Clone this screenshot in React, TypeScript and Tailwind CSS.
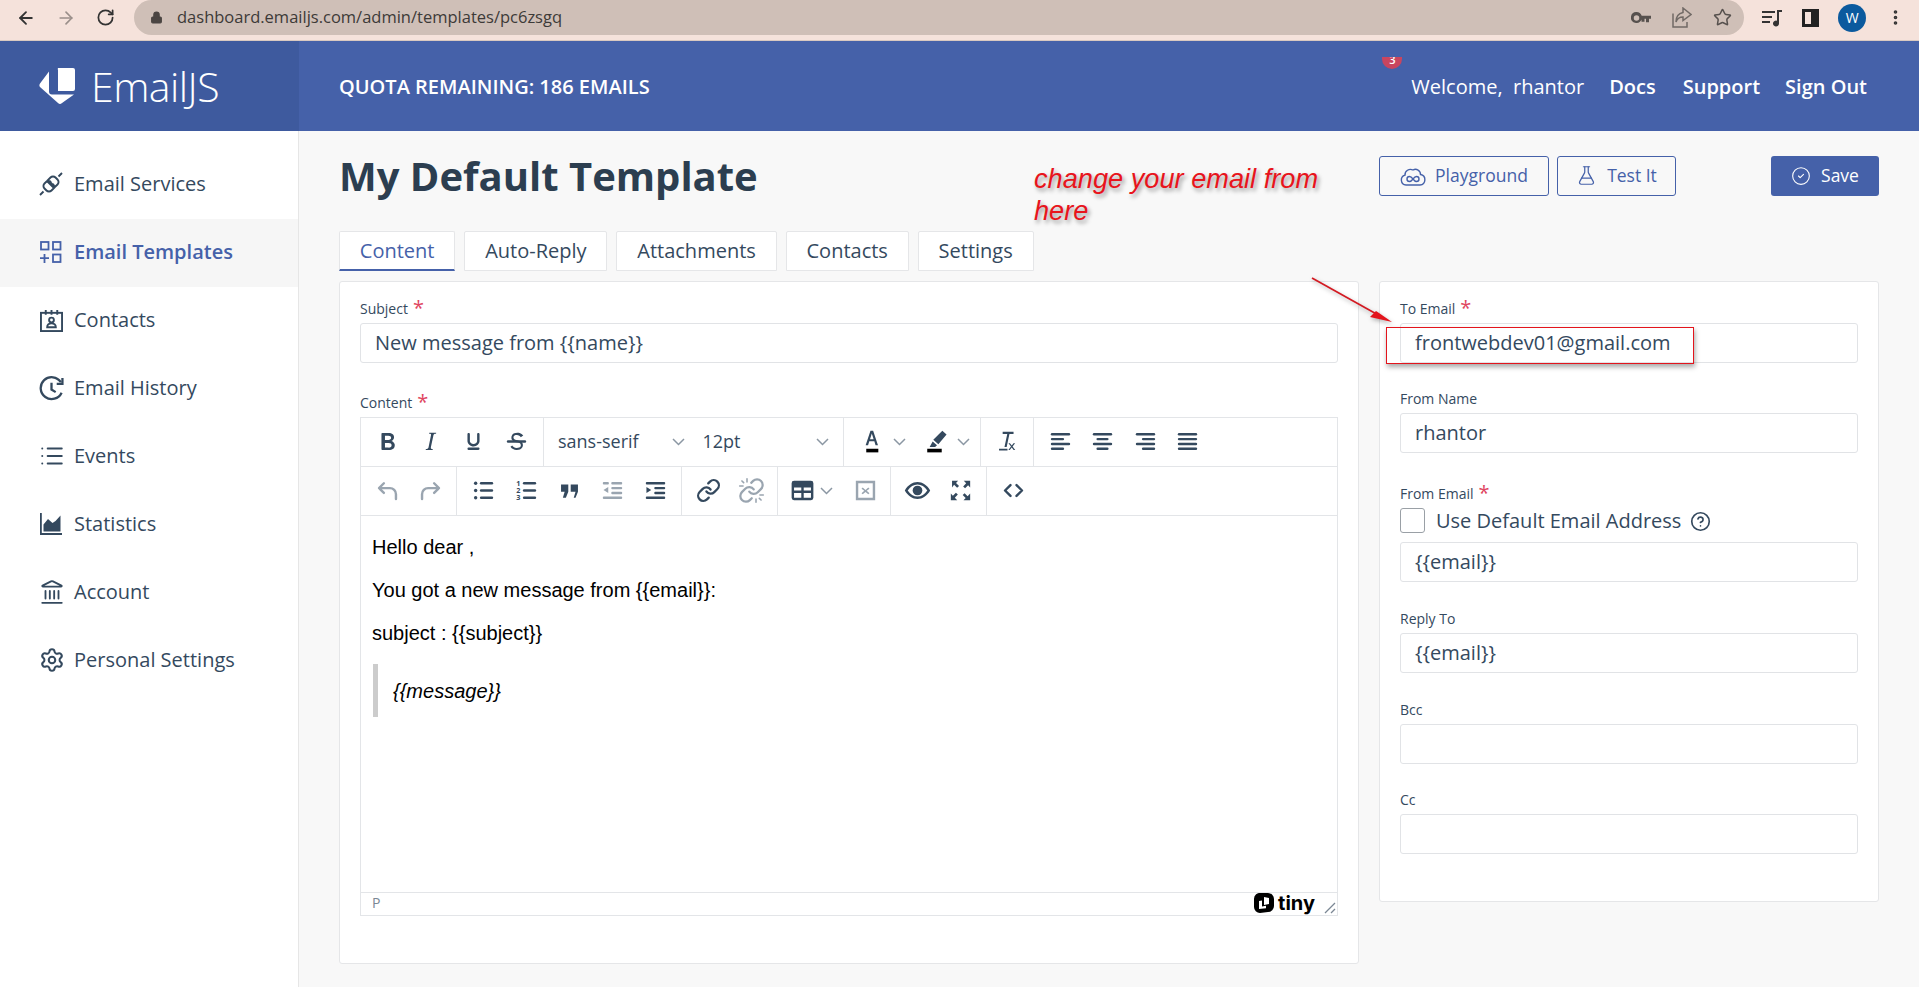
import { ReactNode } from 'react';
import {
  ArrowLeft, ArrowRight, RotateCw, Lock, Star, MoreVertical,
  List, Landmark, Settings, FlaskConical, CircleCheck, CircleHelp, Link,
} from 'lucide-react';

const FONT = "font-['Open_Sans',sans-serif]";

function Ico({ children, gray }: { children: ReactNode; gray?: boolean }) {
  return (
    <svg width="29" height="29" viewBox="0 0 24 24" fill="currentColor" className={gray ? 'text-[#9aa5b0]' : 'text-[#34495e]'}>
      {children}
    </svg>
  );
}

function Chevron({ className = '' }: { className?: string }) {
  return (
    <svg width="13" height="8" viewBox="0 0 13 8" fill="none" stroke="#8b97a3" strokeWidth="1.5" className={className}>
      <path d="M1 1l5.500 5.500L12 1" />
    </svg>
  );
}

function Btn({ children, w = 'w-[43px]' }: { children: ReactNode; w?: string }) {
  return <div className={`${w} h-full flex items-center justify-center shrink-0`}>{children}</div>;
}

function Group({ children, w, last }: { children: ReactNode; w: string; last?: boolean }) {
  return <div className={`${w} h-full pb-[1px] flex items-center justify-center shrink-0 ${last ? '' : 'border-r border-[#e3e5e8]'}`}>{children}</div>;
}

const lines = (rows: [number, number][]) =>
  rows.map(([x, w], i) => <rect key={i} x={x} y={5 + i * 4} width={w} height="2" rx="1" />);

function Toolbar() {
  return (
    <>
      <div className="h-[49px] flex items-center border-b border-[#e3e5e8]">
        <Group w="w-[183px]">
          <Btn><Ico><path d="M7.800 19c-.3 0-.5 0-.6-.2l-.2-.5V5.700c0-.2 0-.4.2-.5l.6-.2h5c1.500 0 2.700.3 3.500 1 .7.6 1.100 1.400 1.100 2.500a3 3 0 01-.6 1.900c-.4.6-1 1-1.600 1.200.4.1.9.3 1.300.6s.8.7 1 1.200c.4.4.5 1 .5 1.600 0 1.300-.4 2.300-1.300 3-.8.7-2.100 1-3.800 1H7.800zm5-8.300c.6 0 1.200-.1 1.600-.5.4-.3.6-.7.6-1.300 0-1.100-.8-1.700-2.300-1.700H9.900v3.500h2.900zm0 6.400c.9 0 1.500-.2 2-.5.4-.3.6-.8.6-1.400 0-1.300-.8-2-2.400-2H9.900V17h3z" /></Ico></Btn>
          <Btn><Ico><path d="M16.700 4.700l-.1.9h-.3c-.6 0-1 0-1.400.3-.3.3-.4.6-.5 1.100l-2.100 9.800v.6c0 .5.4.8 1.400.8h.2l-.2.8H8l.2-.8h.2c1.100 0 1.800-.5 2-1.500l2-9.800.1-.5c0-.6-.4-.8-1.400-.8h-.3l.2-.9h5.800z" /></Ico></Btn>
          <Btn><Ico><path d="M16 5c.6 0 1 .4 1 1v5.500a4 4 0 01-.4 1.800l-1 1.400a5.300 5.300 0 01-5.500 1 5 5 0 01-1.600-1c-.5-.4-.8-.9-1.100-1.400a4 4 0 01-.4-1.800V6c0-.6.4-1 1-1s1 .4 1 1v5.500c0 .3 0 .6.2 1l.6.7a3.300 3.300 0 002.200.8 3.400 3.400 0 002.200-.8c.3-.2.4-.5.6-.8l.2-.9V6c0-.6.4-1 1-1zM8 17h8c.6 0 1 .4 1 1s-.4 1-1 1H8a1 1 0 010-2z" /></Ico></Btn>
          <Btn><Ico><path d="M15.600 8.500c-.5-.7-1-1.100-1.300-1.300-.6-.4-1.300-.6-2-.6-2.700 0-2.800 1.700-2.800 2.100 0 1.600 1.800 2 3.200 2.300 4.400.9 4.600 2.800 4.600 3.900 0 1.400-.7 4.100-5 4.100A6.200 6.200 0 017 16.400l1.500-1.100c.4.6 1.600 2 3.700 2 1.600 0 2.500-.4 3-1 .3-.4.4-.9.4-1.300 0-1.600-1.800-2-3.200-2.300-4.400-.9-4.600-2.800-4.600-3.900 0-1.400.7-4.100 5-4.100 1.300 0 2.400.3 3.400 1 .5.3 1 .8 1.400 1.300l-1.500 1z" /><path d="M5 11h14a1 1 0 010 2H5a1 1 0 010-2z" /></Ico></Btn>
        </Group>
        <Group w="w-[300px]">
          <div className="w-[146px] pl-[14px] pr-[5px] flex items-center justify-between text-[18px] text-[#34495e]">sans-serif<Chevron /></div>
          <div className="w-[154px] pl-[13px] pr-[14px] flex items-center justify-between text-[18px] text-[#34495e]">12pt<Chevron /></div>
        </Group>
        <Group w="w-[137px]">
          <Btn w="w-[38px]"><Ico><path d="M7 18h10v3H7z" fill="#000" transform="translate(-1 0)" /><path d="M12 3h1.200l4 12h-2l-1-3.200H10L9 15H7l4-12zm-1.400 7.100h3l-1.500-4.800-1.500 4.800z" transform="translate(-1.500 0)" /></Ico></Btn>
          <Chevron className="mr-[13px]" />
          <Btn w="w-[38px]"><Ico><path d="M16 3l3.500 3.200-6.800 8-4.200-3.600L16 3zM8 12l3.600 3.100-1.600 1.400H5.500L8 12z" /><path d="M3.500 18h12v3h-12z" fill="#000" /></Ico></Btn>
          <Chevron />
        </Group>
        <Group w="w-[53px]">
          <Ico><path d="M8 4h9v1.700h-3.400l-2.300 10.800H9.500L11.800 5.700H8zM5 18h7v1.500H5z" /><path d="M14 13.500l1.500 1.900 1.500-1.900h1.300l-2.100 2.700 2.200 2.800h-1.300l-1.600-2-1.600 2H12.700l2.200-2.800-2.100-2.700z" /></Ico>
        </Group>
        <div className="h-full pb-[1px] flex items-center pl-[5px]">
          <Btn w="w-[42.500px]"><Ico>{lines([[4, 16], [4, 11], [4, 16], [4, 11]])}</Ico></Btn>
          <Btn w="w-[42.500px]"><Ico>{lines([[4, 16], [7, 10], [4, 16], [7, 10]])}</Ico></Btn>
          <Btn w="w-[42.500px]"><Ico>{lines([[4, 16], [9, 11], [4, 16], [9, 11]])}</Ico></Btn>
          <Btn w="w-[42.500px]"><Ico>{lines([[4, 16], [4, 16], [4, 16], [4, 16]])}</Ico></Btn>
        </div>
      </div>
      <div className="h-[49px] flex items-center border-b border-[#e3e5e8]">
        <Group w="w-[96px]">
          <Btn><Ico gray><path d="M9 6L5 10l4 4M5 10h9a5 5 0 015 5v4" fill="none" stroke="currentColor" strokeWidth="2" strokeLinecap="round" strokeLinejoin="round" /></Ico></Btn>
          <Btn><Ico gray><path d="M15 6l4 4-4 4M19 10h-9a5 5 0 00-5 5v4" fill="none" stroke="currentColor" strokeWidth="2" strokeLinecap="round" strokeLinejoin="round" /></Ico></Btn>
        </Group>
        <Group w="w-[225px]">
          <Btn><Ico><circle cx="5.500" cy="6" r="1.400" /><circle cx="5.500" cy="12" r="1.400" /><circle cx="5.500" cy="18" r="1.400" /><rect x="9" y="5" width="11" height="2" rx="1" /><rect x="9" y="11" width="11" height="2" rx="1" /><rect x="9" y="17" width="11" height="2" rx="1" /></Ico></Btn>
          <Btn><Ico><text x="3.500" y="8" fontSize="6" fontWeight="700">1</text><text x="3.500" y="14" fontSize="6" fontWeight="700">2</text><text x="3.500" y="20" fontSize="6" fontWeight="700">3</text><rect x="9" y="5" width="11" height="2" rx="1" /><rect x="9" y="11" width="11" height="2" rx="1" /><rect x="9" y="17" width="11" height="2" rx="1" /></Ico></Btn>
          <Btn><Ico><path d="M5 7h6v6l-2 5H6.500l1.500-5H5zM13 7h6v6l-2 5h-1.500l1.500-5h-4z" /></Ico></Btn>
          <Btn><Ico gray><rect x="11" y="5" width="9" height="2" rx=".8" /><rect x="11" y="9" width="9" height="2" rx=".8" /><rect x="11" y="13" width="9" height="2" rx=".8" /><rect x="4" y="17" width="16" height="2" rx=".8" /><rect x="4" y="5" width="5" height="2" rx=".8" /><path d="M8.500 9v5L4.500 11.500z" /></Ico></Btn>
          <Btn><Ico><rect x="11" y="9" width="9" height="2" rx=".8" /><rect x="11" y="13" width="9" height="2" rx=".8" /><rect x="4" y="5" width="16" height="2" rx=".8" /><rect x="4" y="17" width="16" height="2" rx=".8" /><path d="M4.500 9v5l4-2.500z" /></Ico></Btn>
        </Group>
        <Group w="w-[96px]">
          <Btn><Link size={25} strokeWidth={2.2} className="text-[#34495e]" /></Btn>
          <Btn>
            <svg width="27" height="27" viewBox="0 0 24 24" fill="none" stroke="#9aa5b0" strokeWidth="2" strokeLinecap="round">
              <path d="M10 13a5 5 0 007.540.540l3-3a5 5 0 00-7.070-7.070l-1.720 1.710" />
              <path d="M14 11a5 5 0 00-7.540-.540l-3 3a5 5 0 007.070 7.070l1.710-1.710" />
              <path d="M8 1.500v3M1.500 8h3M16 19.500v3M19.500 16h3M3.500 3.500l1.500 1.500M19 19l1.500 1.500" strokeWidth="1.400" />
            </svg>
          </Btn>
        </Group>
        <Group w="w-[113px]">
          <Btn w="w-[36px]"><Ico><path d="M5 4h14a2 2 0 012 2v12a2 2 0 01-2 2H5a2 2 0 01-2-2V6a2 2 0 012-2zm0 5.500V12h6V9.500zm8 0V12h6V9.500zM5 14v4h6v-4zm8 0v4h6v-4z" fillRule="evenodd" /></Ico></Btn>
          <Chevron className="mr-[14px]" />
          <Btn w="w-[37px]"><Ico gray><path d="M4 4h16v16H4zm2 2v12h12V6zm3.700 3.500l2.300 2 2.300-2 1 1-2.300 1.800 2.300 1.900-1 1-2.300-2-2.300 2-1-1 2.300-1.900-2.300-1.800z" fillRule="evenodd" /></Ico></Btn>
        </Group>
        <Group w="w-[96px]">
          <Btn><Ico><path d="M1.500 12C4 7.500 8 5 12 5s8 2.500 10.500 7c-2.500 4.500-6.500 7-10.500 7s-8-2.500-10.500-7zm2.400 0c2 3.200 5 5 8.100 5s6.100-1.800 8.100-5c-2-3.200-5-5-8.100-5s-6.100 1.800-8.100 5z" fillRule="evenodd" /><circle cx="12" cy="12" r="4" /></Ico></Btn>
          <Btn><Ico><path d="M4 4h6L8.300 5.700l2.500 2.500-1.600 1.600-2.500-2.500L5 9.500V4zM20 4v5.500l-1.700-1.800-2.500 2.500-1.600-1.600 2.500-2.500L14.700 4zM4 20v-5.500l1.700 1.800 2.500-2.500 1.600 1.600-2.500 2.500L9.300 20zM20 20h-5.500l1.800-1.700-2.500-2.500 1.600-1.600 2.500 2.500 2.100-2.200z" /></Ico></Btn>
        </Group>
        <Group w="w-[53px]" last>
          <Ico><path d="M9.500 7.500L5 12l4.500 4.500M14.500 7.500L19 12l-4.500 4.500" fill="none" stroke="currentColor" strokeWidth="2" strokeLinecap="round" strokeLinejoin="round" /></Ico>
        </Group>
      </div>
    </>
  );
}

function Field({ label, required, value, mt = '' }: { label: string; required?: boolean; value?: string; mt?: string }) {
  return (
    <div className={mt}>
      <FieldLabel label={label} required={required} />
      <TextBox value={value} />
    </div>
  );
}

function FieldLabel({ label, required }: { label: string; required?: boolean }) {
  return (
    <div className="h-[22px] text-[14px] leading-[16px] text-[#34495e] flex items-start">
      <span>{label}</span>
      {required && <span className="text-[#e0465f] text-[20px] leading-[14px] ml-[5px]">*</span>}
    </div>
  );
}

function TextBox({ value }: { value?: string }) {
  return (
    <div className="h-[40px] border border-[#e1e3e6] rounded-[3px] bg-white px-[14px] pb-[1px] flex items-center text-[20px] text-[#34495e]">
      {value}
    </div>
  );
}

const NAV: { label: string; icon: ReactNode; active?: boolean }[] = [
  {
    label: 'Email Services',
    icon: (
      <svg width="24" height="26" viewBox="0 0 24 24" fill="none" stroke="currentColor" strokeWidth="1.900">
        <path d="M1 23l3.500-3.500M23 1l-3.500 3.500M12 9l-2 2M15 12l-2 2" />
        <path d="M8 9l7 7-2.500 2.500a3.500 3.500 0 01-5 0l-2-2a3.500 3.500 0 010-5zM16 15L9 8l2.500-2.500a3.500 3.500 0 015 0l2 2a3.500 3.500 0 010 5z" />
      </svg>
    ),
  },
  {
    label: 'Email Templates',
    active: true,
    icon: (
      <svg width="24" height="25" viewBox="0 0 24 24" fill="none" stroke="currentColor" strokeWidth="1.800">
        <rect x="2" y="1.500" width="7.500" height="7.500" />
        <rect x="14" y="1.500" width="7.500" height="7.500" />
        <rect x="14" y="14" width="7.500" height="7.500" />
        <path d="M1 17.700h9M5.500 13.500v9" />
      </svg>
    ),
  },
  {
    label: 'Contacts',
    icon: (
      <svg width="25" height="23" viewBox="0 0 24 24" fill="none" stroke="currentColor" strokeWidth="2">
        <rect x="1" y="4" width="22" height="19" />
        <path d="M6 1v5M12 1v5M18 1v5M7.500 19c0-3 2-4 4.500-4s4.500 1 4.500 4z" />
        <circle cx="12" cy="11.500" r="2.500" />
      </svg>
    ),
  },
  {
    label: 'Email History',
    icon: (
      <svg width="25" height="25" viewBox="0 0 24 24" fill="none" stroke="currentColor" strokeWidth="2.200">
        <path d="M21 6a10.500 10.500 0 10.700 10" />
        <path d="M22.500 2v5.500H17M12 6.500V13l4 2.500" />
      </svg>
    ),
  },
  { label: 'Events', icon: <List size={26} strokeWidth={1.8} /> },
  {
    label: 'Statistics',
    icon: (
      <svg width="24" height="24" viewBox="0 0 24 24" fill="currentColor">
        <path d="M1 1h1.800v20H23v2H1z" />
        <path d="M4.500 19.500v-7L9 7l4.500 4 3-2 5-5.500v16z" />
      </svg>
    ),
  },
  { label: 'Account', icon: <Landmark size={26} strokeWidth={1.7} /> },
  { label: 'Personal Settings', icon: <Settings size={26} strokeWidth={1.9} /> },
];

function Chrome() {
  return (
    <div className="h-[41px] bg-[#f5e2db] border-b border-[#d9c9c1] flex items-start shrink-0">
      <div className="w-[134px] h-[35px] flex items-center text-[#333] shrink-0">
        <ArrowLeft size={20} strokeWidth={2.2} className="ml-[16px]" />
        <ArrowRight size={20} strokeWidth={2} className="ml-[20px] text-[#9a8f8a]" />
        <RotateCw size={19} strokeWidth={2.2} className="ml-[20px]" />
      </div>
      <div className="w-[1610px] h-[35px] rounded-r-[18px] rounded-l-[18px] bg-[#cfbfb7] flex items-center pl-[16px] pr-[12px] shrink-0">
        <Lock size={13} fill="#4b4542" className="text-[#4b4542]" />
        <span className="ml-[14px] text-[16.500px] text-[#3d3a38]">dashboard.emailjs.com/admin/templates/pc6zsgq</span>
        <svg width="20" height="12" viewBox="0 0 20 12" fill="#57514e" className="ml-auto">
          <path d="M5.500 0a5.500 5.500 0 015.200 3.800H20v3h-2v3.500h-3V6.800h-1.500v3h-3V7.600A5.500 5.500 0 115.500 0zm0 3.200a2.500 2.500 0 100 5.500 2.500 2.500 0 000-5.500z" fillRule="evenodd" />
        </svg>
        <svg width="20" height="21" viewBox="0 0 20 21" fill="none" stroke="#716a66" strokeWidth="1.500" className="ml-[21px]">
          <path d="M1 6.500V20h14v-5" />
          <path d="M11 1l8 6.500-8 6V10C7 10 5 12 4 15c0-5 2-8.500 7-9.500z" />
        </svg>
        <Star size={19} strokeWidth={1.9} className="ml-[21px] text-[#57514e]" />
      </div>
      <div className="flex-1 h-[35px] flex items-center justify-between pl-[18px] pr-[14px] text-[#333]">
        <svg width="20" height="18" viewBox="0 0 20 18" fill="currentColor">
          <path d="M0 2h13v2H0zM0 7h10v2H0zM0 12h8v2H0zM15 1h5v2h-3v11.500a3 3 0 11-2-2.800z" />
        </svg>
        <div className="w-[17px] h-[18px] border-[3px] border-[#222] border-r-[8px]" />
        <div className="w-[28px] h-[28px] rounded-full bg-[#0b5a9e] text-white text-[14px] flex items-center justify-center">W</div>
        <MoreVertical size={19} strokeWidth={2.600} />
      </div>
    </div>
  );
}

function Header() {
  return (
    <div className="h-[90px] bg-[#4561a9] flex text-white shrink-0">
      <div className="w-[299px] bg-[#3e5a9e] flex items-center pl-[39px] shrink-0">
        <svg width="36" height="36" viewBox="0 0 36 36" fill="#fff">
          <path d="M19 0h15a2 2 0 012 2v19a2 2 0 01-2 2H19a0 0 0 010 0V2a2 2 0 010-2z" />
          <path d="M10 3.500v20a3 3 0 003 3h22L23 35a3 3 0 01-4 0L1 19a3 3 0 010-3.500z" />
        </svg>
        <span className="ml-[16px] text-[41px] font-light tracking-[-0.5px] leading-none">EmailJS</span>
      </div>
      <div className="flex-1 flex items-center pl-[40px] pr-[52px] pt-[1px]">
        <span className="text-[20px] font-semibold">QUOTA REMAINING: 186 EMAILS</span>
        <div className="ml-auto relative flex items-center text-[20px] font-semibold">
          <span className="absolute left-[-29px] top-[-15px] w-[20px] h-[12px] rounded-b-full bg-[#c9455f] text-[11px] leading-[6px] text-center overflow-hidden">3</span>
          <span className="font-normal">Welcome,&nbsp; rhantor</span>
          <span className="ml-[25px]">Docs</span>
          <span className="ml-[27px]">Support</span>
          <span className="ml-[25px]">Sign Out</span>
        </div>
      </div>
    </div>
  );
}

function Annotation() {
  return (
    <>
      <div className="absolute left-[1034px] top-[163px] w-[320px] font-['Liberation_Sans',sans-serif] italic text-[27.200px] leading-[32px] text-[#e8141c] [text-shadow:2px_3px_4px_rgba(0,0,0,0.4)]">
        change your email from here
      </div>
      <svg className="absolute left-[1305px] top-[270px] drop-shadow-[1px_2px_2px_rgba(0,0,0,0.3)]" width="100" height="60" viewBox="0 0 100 60">
        <path d="M7 8L75 46" stroke="#d31a22" strokeWidth="1.700" />
        <path d="M87 52L65 47l6-6 3 2z" fill="#e3141c" />
      </svg>
      <div className="absolute left-[1386px] top-[327px] w-[308px] h-[37px] border border-[#e3141c] shadow-[1px_3px_5px_rgba(0,0,0,0.35)]" />
    </>
  );
}

export default function App() {
  return (
    <div className={`relative w-full h-screen overflow-hidden flex flex-col bg-[#f8f8f8] ${FONT}`}>
      <Chrome />
      <Header />
      <div className="flex flex-1 min-h-0">
        <aside className="w-[299px] shrink-0 bg-white border-r border-[#e6e6e6] pt-[20px]">
          {NAV.map((n) => (
            <div
              key={n.label}
              className={`h-[68px] pb-[2px] flex items-center text-[20px] ${n.active ? 'bg-[#f6f6f6] text-[#4561a9] font-semibold' : 'text-[#34495e]'}`}
            >
              <div className="w-[74px] pl-[39px] shrink-0 flex items-center">{n.icon}</div>
              {n.label}
            </div>
          ))}
        </aside>
        <main className="flex-1 min-w-0 pl-[40px] pr-[40px]">
          <div className="h-[100px] pt-[25px] flex items-start">
            <h1 className="text-[40px] leading-[40px] font-bold text-[#2c3e50]">My Default Template</h1>
            <div className="ml-auto flex text-[17.500px]">
              <div className="w-[170px] h-[40px] pb-[1px] border border-[#4561a9] rounded-[3px] flex items-center justify-center text-[#4561a9]">
                <svg width="26" height="22" viewBox="0 0 26 22" fill="none" stroke="currentColor" strokeWidth="1.400" className="mr-[9px]">
                  <path d="M6 20a5 5 0 01-1-9.800A5.500 5.500 0 0113 5a5 5 0 017.500 4.500A5.300 5.300 0 0120 20z" />
                  <path d="M13 14c-1.500-2-2-2.500-3.500-2.500a2.500 2.500 0 000 5c1.500 0 2-.5 3.500-2.500s2-2.500 3.500-2.500a2.500 2.500 0 010 5c-1.500 0-2-.5-3.500-2.500z" />
                </svg>
                Playground
              </div>
              <div className="ml-[8px] w-[119px] h-[40px] pb-[1px] border border-[#4561a9] rounded-[3px] flex items-center justify-center text-[#4561a9]">
                <FlaskConical size={21} strokeWidth={1.4} className="mr-[10px]" />
                Test It
              </div>
              <div className="ml-[95px] w-[108px] h-[40px] pb-[1px] rounded-[3px] bg-[#4561a9] text-white flex items-center justify-center">
                <CircleCheck size={20} strokeWidth={1.3} className="mr-[10px]" />
                Save
              </div>
            </div>
          </div>
          <div className="flex gap-[9px] h-[50px] items-start text-[20px] text-[#34495e]">
            {['Content', 'Auto-Reply', 'Attachments', 'Contacts', 'Settings'].map((t, i) => (
              <div
                key={t}
                className={`h-[40px] px-[19.850px] flex items-center bg-white rounded-t-[2px] border border-[#e5e6e8] ${i === 0 ? 'border-b-[2px] border-b-[#4561a9] text-[#4561a9]' : ''}`}
              >
                {t}
              </div>
            ))}
          </div>
          <div className="flex gap-[20px] items-start">
            <div className="w-[1020px] h-[683px] shrink-0 bg-white border border-[#e5e6e8] rounded-[3px] px-[20px] pt-[19px]">
              <Field label="Subject" required value="New message from {{name}}" />
              <div className="mt-[32px]">
                <FieldLabel label="Content" required />
                <div className="h-[499px] border border-[#e3e5e8] flex flex-col">
                  <Toolbar />
                  <div className="flex-1 pl-[11px] pt-[20px] font-['Liberation_Sans',sans-serif] text-[20px] leading-[22px] text-black">
                    <p>Hello dear ,</p>
                    <p className="mt-[21px]">You got a new message from {'{{email}}'}:</p>
                    <p className="mt-[21px]">subject : {'{{subject}}'}</p>
                    <blockquote className="mt-[20px] ml-[1px] h-[53px] pl-[15px] border-l-[5px] border-[#cccccc] italic flex items-center">
                      {'{{message}}'}
                    </blockquote>
                  </div>
                  <div className="h-[23px] border-t border-[#e3e5e8] flex items-start justify-between pl-[11px] text-[14px] leading-[16px] text-[#7b8794] relative">
                    <span className="pt-[2px]">P</span>
                    <div className="flex items-center h-[19px] pr-[22px] font-['Inter',sans-serif] font-bold text-[20px] text-black">
                      <svg width="20" height="20" viewBox="0 0 20 20" className="mr-[4px]">
                        <path d="M7 0h7a6 6 0 016 6v7a6 6 0 01-6 6l-8 1a6 6 0 01-6-6V6a6 6 0 017-6z" fill="#000" />
                        <path d="M10 4l5 1v6l-5 1zM5 8l3-.5v6l4-.8v2.500L5 16z" fill="#fff" />
                      </svg>
                      tiny
                    </div>
                    <svg className="absolute right-[1px] bottom-[1px]" width="12" height="12" viewBox="0 0 12 12" stroke="#7b8794" strokeWidth="1.300">
                      <path d="M1 11L11 1M7 11l4-4" />
                    </svg>
                  </div>
                </div>
              </div>
            </div>
            <div className="w-[500px] h-[621px] shrink-0 bg-white border border-[#e5e6e8] rounded-[3px] px-[20px] pt-[19px]">
              <Field label="To Email" required value="frontwebdev01@gmail.com" />
              <Field label="From Name" value="rhantor" mt="mt-[28px]" />
              <div className="mt-[33px]">
                <FieldLabel label="From Email" required />
                <div className="h-[25px] flex items-center text-[20px] text-[#34495e]">
                  <div className="w-[25px] h-[25px] border border-[#9aa0a6] rounded-[3px] mr-[11px]" />
                  Use Default Email Address
                  <CircleHelp size={21} strokeWidth={1.900} className="ml-[9px] mt-[2px]" />
                </div>
                <div className="mt-[9px]"><TextBox value="{{email}}" /></div>
              </div>
              <Field label="Reply To" value="{{email}}" mt="mt-[29px]" />
              <Field label="Bcc" mt="mt-[29px]" />
              <Field label="Cc" mt="mt-[28px]" />
            </div>
          </div>
        </main>
      </div>
      <Annotation />
    </div>
  );
}
